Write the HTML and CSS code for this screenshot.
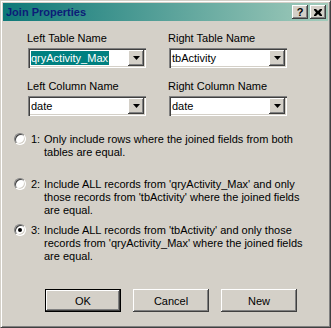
FILE: index.html
```html
<!DOCTYPE html>
<html lang="en">
<head>
  <meta charset="UTF-8">
  <title>Join Properties</title>
  <link rel="stylesheet" href="styles.css">
</head>
<body>
  <div class="window">
    <div class="titlebar">
      <span class="title">Join Properties</span>
      <div class="caption-buttons">
        <span class="cap-btn help">?</span>
        <span class="cap-btn close">
          <svg width="8" height="7" viewBox="0 0 8 7"><path d="M0 0h2l2 2 2-2h2v1L6 3.5 8 6v1H6L4 5 2 7H0V6l2-2.5L0 1z" fill="#000"/></svg>
        </span>
      </div>
    </div>

    <div class="fields">
      <div class="field">
        <div class="label">Left Table Name</div>
        <div class="combo"><span class="value"><span class="selected">qryActivity_Max</span></span><span class="drop"><svg width="7" height="4" viewBox="0 0 7 4"><path d="M0 0h7L3.5 4z" fill="#000"/></svg></span></div>
      </div>
      <div class="field">
        <div class="label">Right Table Name</div>
        <div class="combo"><span class="value">tbActivity</span><span class="drop"><svg width="7" height="4" viewBox="0 0 7 4"><path d="M0 0h7L3.5 4z" fill="#000"/></svg></span></div>
      </div>
      <div class="field">
        <div class="label">Left Column Name</div>
        <div class="combo"><span class="value">date</span><span class="drop"><svg width="7" height="4" viewBox="0 0 7 4"><path d="M0 0h7L3.5 4z" fill="#000"/></svg></span></div>
      </div>
      <div class="field">
        <div class="label">Right Column Name</div>
        <div class="combo"><span class="value">date</span><span class="drop"><svg width="7" height="4" viewBox="0 0 7 4"><path d="M0 0h7L3.5 4z" fill="#000"/></svg></span></div>
      </div>
    </div>

    <div class="options">
      <div class="option opt-1">
        <span class="radio"></span>
        <span class="num">1:</span>
        <span class="desc">Only include rows where the joined fields from both<br>tables are equal.</span>
      </div>
      <div class="option opt-2">
        <span class="radio"></span>
        <span class="num">2:</span>
        <span class="desc">Include ALL records from 'qryActivity_Max' and only<br>those records from 'tbActivity' where the joined fields<br>are equal.</span>
      </div>
      <div class="option opt-3">
        <span class="radio checked"></span>
        <span class="num">3:</span>
        <span class="desc">Include ALL records from 'tbActivity' and only those<br>records from 'qryActivity_Max' where the joined fields<br>are equal.</span>
      </div>
    </div>

    <div class="actions">
      <span class="btn default">OK</span>
      <span class="btn">Cancel</span>
      <span class="btn">New</span>
    </div>
  </div>
</body>
</html>
```

FILE: styles.css
```css
body { margin: 0; background: #d4d0c8; font-family: "Liberation Sans", Arial, sans-serif; font-size: 11px; color: #000; }

.window {
  width: 331px; height: 328px; box-sizing: border-box;
  padding: 2px;
  background: #d4d0c8;
  border: 1px solid; border-color: #d4d0c8 #404040 #404040 #d4d0c8;
  box-shadow: inset 1px 1px #fff, inset -1px -1px #808080;
}

.titlebar {
  height: 18px; display: flex; align-items: center; justify-content: space-between;
  padding: 0 2px 0 3px;
  background: linear-gradient(to right, #0e7878, #a2cbbb);
}
.title { color: #0c1c78; font-weight: bold; font-size: 11px; }
.caption-buttons { display: flex; gap: 2px; }
.cap-btn {
  width: 16px; height: 14px; box-sizing: border-box;
  display: flex; align-items: center; justify-content: center;
  background: #d4d0c8; font-weight: bold; font-size: 11px; line-height: 14px;
  box-shadow: inset -1px -1px #404040, inset 1px 1px #fff, inset -2px -2px #808080;
}

.fields {
  display: grid; grid-template-columns: 119px 119px; column-gap: 22px; row-gap: 12px;
  margin: 11px 0 0 24px;
}
.label { line-height: 13px; height: 13px; }
.combo {
  display: flex; margin: 3px 0 0 1px; width: 118px; height: 20px; box-sizing: border-box;
  background: #fff; padding: 2px;
  box-shadow: inset 1px 1px #808080, inset 2px 2px #404040, inset -1px -1px #fff, inset -2px -2px #d4d0c8;
}
.value { flex: 1; line-height: 16px; padding-left: 1px; white-space: nowrap; overflow: hidden; }
.selected { background: #008080; color: #fff; padding: 1px 1px 1px 0; }
.drop {
  width: 16px; height: 16px; box-sizing: border-box;
  display: flex; align-items: center; justify-content: center;
  background: #d4d0c8;
  box-shadow: inset -1px -1px #404040, inset 1px 1px #fff, inset -2px -2px #808080;
}

.options { margin: 17px 0 0 11px; }
.option { display: flex; line-height: 13px; }
.opt-2 { margin-top: 19px; }
.opt-3 { margin-top: 7px; }
.radio {
  width: 12px; height: 12px; box-sizing: border-box; flex: none;
  border-radius: 50%; background: #fff; position: relative;
  border: 1px solid; border-color: #808080 #fff #fff #808080;
  box-shadow: inset 1px 1px #404040, inset -1px -1px #d4d0c8;
}
.radio.checked::after {
  content: ""; position: absolute; left: 3px; top: 3px;
  width: 4px; height: 4px; border-radius: 50%; background: #000;
}
.num { margin-left: 5px; width: 13px; flex: none; }

.actions { display: flex; gap: 12px; margin: 26px 0 0 42px; }
.btn {
  width: 76px; height: 23px; box-sizing: border-box;
  display: flex; align-items: center; justify-content: center;
  background: #d4d0c8;
  box-shadow: inset -1px -1px #404040, inset 1px 1px #fff, inset -2px -2px #808080;
}
.btn.default {
  border: 1px solid #000;
  box-shadow: inset -1px -1px #404040, inset 1px 1px #fff, inset -2px -2px #808080;
}
```
